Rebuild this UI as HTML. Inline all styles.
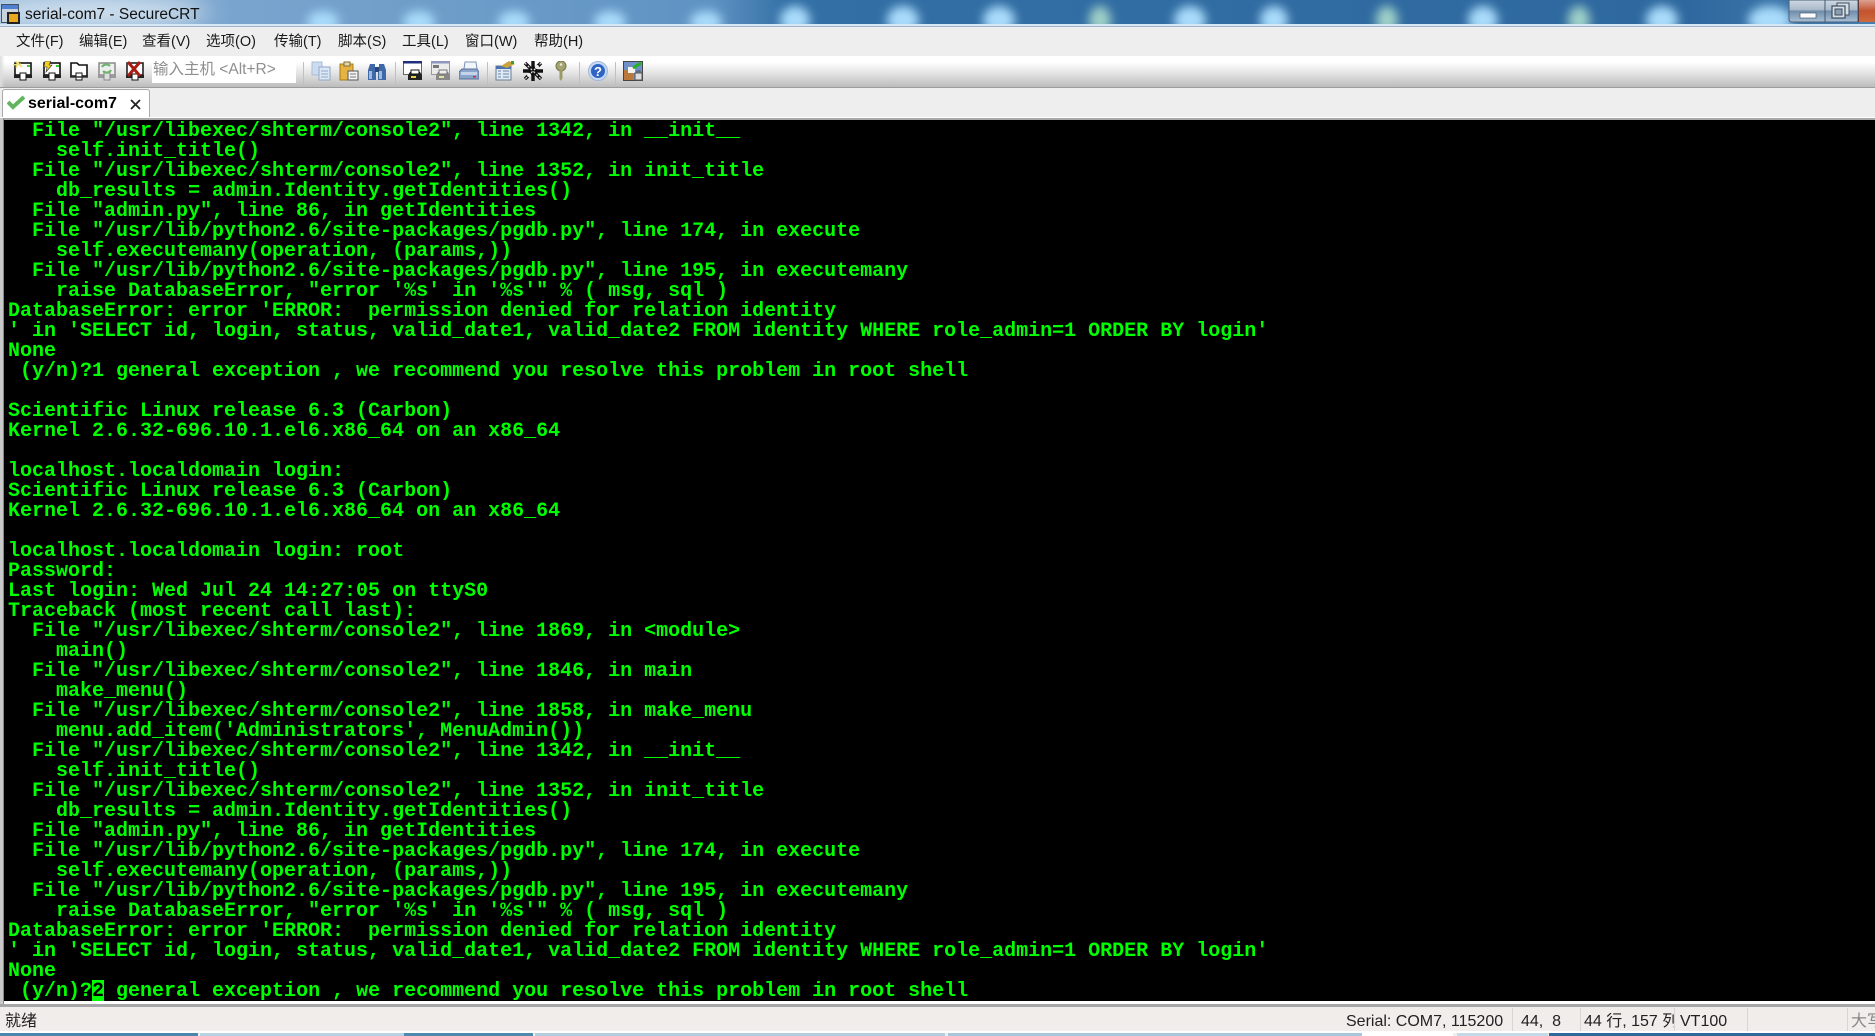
<!DOCTYPE html>
<html><head><meta charset="utf-8"><style>
html,body{margin:0;padding:0;background:#eee}
#w{position:relative;width:1875px;height:1036px;overflow:hidden;background:#eee;font-family:"Liberation Sans","Noto Sans CJK SC",sans-serif;color:#111}
#w>*{position:absolute}
.m{top:33px;font-size:14.5px;line-height:18px;white-space:nowrap;color:#1a1a1a}
.i{top:61px;width:20px;height:20px;filter:blur(.35px)}
.sep{top:62px;width:1px;height:22px;background:#c0c0c0}
pre{margin:0;left:8px;top:122px;font:bold 20px/20px "Liberation Mono",monospace;color:#0f0;white-space:pre}
.s{top:1013px;font-size:16px;line-height:18px;white-space:nowrap;color:#222}
.v{top:1008px;width:1px;height:23px;background:#d8d5d3}
.tb{top:1033px;height:3px}
</style></head><body><div id="w">
<svg style="left:0;top:0" width="1875" height="27" viewBox="0 0 1875 27">
<defs><filter id="b" x="-50%" y="-50%" width="200%" height="200%"><feGaussianBlur stdDeviation="5"/></filter>
<filter id="c"><feGaussianBlur stdDeviation="12"/></filter>
<linearGradient id="g" x1="0" x2="1" y1="0" y2="0"><stop offset="0" stop-color="#86add3"/><stop offset=".38" stop-color="#5f93c3"/><stop offset=".42" stop-color="#336fa5"/><stop offset=".9" stop-color="#2e689e"/><stop offset="1" stop-color="#457fb0"/></linearGradient></defs>
<rect width="1875" height="27" fill="url(#g)"/>
<ellipse cx="90" cy="12" rx="120" ry="16" fill="#d6e4f0" filter="url(#c)"/>
<g filter="url(#b)" fill="#a9dcfb">
<ellipse cx="323" cy="22" rx="16" ry="11"/><ellipse cx="419" cy="22" rx="16" ry="11"/><ellipse cx="514" cy="22" rx="16" ry="11"/><ellipse cx="610" cy="22" rx="16" ry="11"/><ellipse cx="706" cy="22" rx="16" ry="11"/>
<ellipse cx="795" cy="20" rx="15" ry="14"/><ellipse cx="903" cy="20" rx="16" ry="14"/><ellipse cx="999" cy="20" rx="16" ry="14"/><ellipse cx="1100" cy="20" rx="11" ry="14" fill="#9fd0c8"/><ellipse cx="1190" cy="20" rx="16" ry="14"/><ellipse cx="1274" cy="20" rx="14" ry="14"/><ellipse cx="1387" cy="20" rx="11" ry="14" fill="#9fd0c8"/><ellipse cx="1483" cy="20" rx="15" ry="14"/><ellipse cx="1579" cy="20" rx="11" ry="14" fill="#9fd0c8"/><ellipse cx="1662" cy="20" rx="16" ry="14"/><ellipse cx="1770" cy="20" rx="22" ry="14"/>
</g>
<rect y="24" width="1875" height="2" fill="#d6e8f6"/><rect y="26" width="1875" height="1" fill="#9fb4c6"/>
</svg>
<svg style="left:1788px;top:0" width="87" height="24" viewBox="0 0 87 24">
<defs><linearGradient id="bt" x1="0" x2="0" y1="0" y2="1"><stop offset="0" stop-color="#cfd9e2"/><stop offset=".45" stop-color="#a9b9c9"/><stop offset=".5" stop-color="#6f8cab"/><stop offset="1" stop-color="#a9c0d6"/></linearGradient>
<linearGradient id="rd" x1="0" x2="0" y1="0" y2="1"><stop offset="0" stop-color="#dca093"/><stop offset=".5" stop-color="#c2532f"/><stop offset="1" stop-color="#cf6a3a"/></linearGradient></defs>
<path d="M1 0V19Q1 22 4 22H70V0Z" fill="url(#bt)" stroke="#4d5f74"/>
<rect x="36.5" y="0" width="1" height="22" fill="#47596d"/>
<rect x="70" y="0" width="17" height="22" fill="url(#rd)"/>
<rect x="70" y="0" width="1" height="22" fill="#5a3a3a"/>
<rect x="12" y="13" width="16" height="5" fill="#fff" stroke="#4a5a6c" stroke-width=".7"/>
<rect x="49" y="3" width="12" height="12" fill="#d5dde5" stroke="#3f4d5e"/>
<rect x="44" y="6" width="13" height="12" fill="#d5dde5" stroke="#3f4d5e" stroke-width="1.2"/>
<rect x="47" y="9" width="7" height="6" fill="#8a9db1" stroke="#3f4d5e"/>
</svg>
<svg style="left:1px;top:3px" width="20" height="22" viewBox="0 0 20 22"><rect x=".5" y="1.5" width="17" height="18" fill="#c9d3de" stroke="#46525f"/><rect x="1" y="2" width="16" height="4" fill="#4f7fd0"/><rect x="6" y="9" width="13" height="12" fill="#222"/><rect x="8" y="11" width="9" height="8" fill="#e8a820"/></svg>
<div style="left:25px;top:5px;font-size:15.5px;line-height:19px;color:#111;white-space:nowrap">serial-com7 - SecureCRT</div>

<div class="m" style="left:16px">文件(F)</div><div class="m" style="left:79px">编辑(E)</div><div class="m" style="left:142px">查看(V)</div><div class="m" style="left:206px">选项(O)</div><div class="m" style="left:274px">传输(T)</div><div class="m" style="left:338px">脚本(S)</div><div class="m" style="left:402px">工具(L)</div><div class="m" style="left:465px">窗口(W)</div><div class="m" style="left:534px">帮助(H)</div>

<div style="left:0;top:56px;width:1875px;height:31px;background:linear-gradient(#fff 0,#fff 20%,#e4e4e4 55%,#bcbcbc 100%)"></div>
<div style="left:0;top:87px;width:1875px;height:1px;background:#9c9c9c"></div>
<div style="left:0;top:56px;width:5px;height:31px;background:linear-gradient(90deg,#ddd,transparent)"></div>

<svg class="i" style="left:13px" viewBox="0 0 20 20"><rect x="2" y="2" width="16" height="12" fill="#fff" stroke="#111" stroke-width="1.6"/><rect x="1" y="14" width="18" height="3" fill="#222"/><rect x="7" y="12" width="6" height="7" fill="#fff" stroke="#111"/><path d="M2 0L9 6M6 0L3 7M0 4L8 3" stroke="#e8e070" stroke-width="1.6"/><rect x="14" y="4" width="3" height="2" fill="#3c3"/></svg>
<svg class="i" style="left:42px" viewBox="0 0 20 20"><rect x="2" y="2" width="16" height="12" fill="#fff" stroke="#111" stroke-width="1.6"/><rect x="1" y="14" width="18" height="3" fill="#222"/><rect x="7" y="12" width="6" height="7" fill="#fff" stroke="#111"/><path d="M3 0H9L7 4H10L4 11L5 6H2Z" fill="#f2d21c" stroke="#333" stroke-width=".6"/><rect x="14" y="4" width="3" height="2" fill="#3c3"/></svg>
<svg class="i" style="left:69px" viewBox="0 0 20 20"><path d="M2 15V2H8L10 4H18V15Z" fill="#fff" stroke="#111" stroke-width="1.6"/><rect x="7" y="12" width="6" height="7" fill="#fff" stroke="#111"/><path d="M1 16H19" stroke="#333" stroke-width="1.4"/></svg>
<svg class="i" style="left:97px" viewBox="0 0 20 20"><rect x="2" y="2" width="16" height="12" fill="#eee" stroke="#8a8a8a" stroke-width="1.5"/><rect x="1" y="14" width="18" height="3" fill="#999"/><rect x="7" y="12" width="6" height="7" fill="#ddd" stroke="#888"/><path d="M5 6A5 5 0 0 1 13 5M14 9A5 5 0 0 1 6 10" fill="none" stroke="#6fb36f" stroke-width="2.2"/></svg>
<svg class="i" style="left:125px" viewBox="0 0 20 20"><rect x="2" y="2" width="16" height="12" fill="#fff" stroke="#222" stroke-width="1.6"/><rect x="1" y="14" width="18" height="3" fill="#222"/><rect x="7" y="13" width="6" height="6" fill="#fff" stroke="#111"/><path d="M3 1L15 15M15 1L3 15" stroke="#a81c12" stroke-width="3"/></svg>

<div style="left:152px;top:63px;width:144px;height:20px;background:#fff"></div>
<div style="left:153px;top:60px;font-size:15.5px;line-height:20px;color:#8f8f8f;white-space:nowrap">输入主机 &lt;Alt+R&gt;</div>
<div class="sep" style="left:303px"></div><div class="sep" style="left:395px"></div><div class="sep" style="left:487px"></div><div class="sep" style="left:579px"></div><div class="sep" style="left:615px"></div>

<svg class="i" style="left:311px" viewBox="0 0 20 20"><rect x="1" y="1" width="10" height="13" fill="#ccdcf0" stroke="#a9bdd8"/><rect x="8" y="6" width="11" height="13" fill="#dbe7f5" stroke="#8fa8c9"/><path d="M10 10H17M10 13H17M10 16H17" stroke="#8fa8c9"/></svg>
<svg class="i" style="left:339px" viewBox="0 0 20 20"><rect x="1" y="3" width="13" height="16" fill="#e5b341" stroke="#a87a18"/><rect x="5" y="1" width="6" height="4" fill="#d9d9b8" stroke="#8a6a20"/><rect x="9" y="10" width="10" height="9" fill="#f4f4f4" stroke="#555"/><path d="M11 13H17M11 16H17" stroke="#777"/></svg>
<svg class="i" style="left:367px" viewBox="0 0 20 20"><path d="M3 3H8V9H9V19H1V9Z" fill="#3f68a8"/><path d="M12 3H17L19 9V19H11V9H12Z" fill="#3f68a8"/><rect x="2" y="10" width="3" height="8" fill="#9db9e0"/><rect x="12" y="10" width="3" height="8" fill="#9db9e0"/><rect x="8" y="6" width="4" height="5" fill="#27467c"/></svg>
<svg class="i" style="left:403px" viewBox="0 0 20 20"><rect x=".5" y=".5" width="18" height="13" fill="#fff" stroke="#666"/><rect x="0" y="0" width="19" height="2.5" fill="#1f2f7c"/><path d="M7 11H17L19 14V19H5V14Z" fill="#222"/><rect x="8" y="9" width="8" height="4" fill="#fff" stroke="#111"/><rect x="8" y="15" width="5" height="2" fill="#e8d24a"/></svg>
<svg class="i" style="left:431px" viewBox="0 0 20 20"><rect x=".5" y=".5" width="18" height="13" fill="#ebebeb" stroke="#999"/><rect x="0" y="0" width="19" height="2.5" fill="#8f97bf"/><rect x="2" y="4" width="6" height="3" fill="#777"/><path d="M7 11H17L19 14V19H5V14Z" fill="#888"/><rect x="8" y="9" width="8" height="4" fill="#eee" stroke="#777"/><rect x="8" y="15" width="5" height="2" fill="#e8e0a0"/></svg>
<svg class="i" style="left:459px" viewBox="0 0 20 20"><path d="M6 1H17L18 8H5Z" fill="#f2f5fa" stroke="#7d93b4"/><path d="M3 8H18L20 11V18H0V11Z" fill="#8aa4cb" stroke="#59719a"/><rect x="2" y="11" width="16" height="3" fill="#c4d3e8"/><rect x="14" y="15" width="3" height="1.5" fill="#c33"/></svg>
<svg class="i" style="left:495px" viewBox="0 0 20 20"><rect x="1" y="5" width="15" height="14" fill="#dfe8f3" stroke="#6b7c90"/><rect x="1" y="5" width="15" height="3" fill="#4d73ad"/><path d="M3 10H6M8 10H14M3 13H6M8 13H14M3 16H6M8 16H14" stroke="#6a87ad"/><path d="M6 5L14 0L20 3L12 7Z" fill="#c9a33f"/><rect x="16" y="0" width="3" height="3" fill="#3ba03b"/></svg>
<svg class="i" style="left:523px" viewBox="0 0 20 20"><path d="M2 2L18 18M18 2L2 18M10 0V20M0 10H20" stroke="#111" stroke-width="3.4"/><path d="M2 2L18 18M18 2L2 18" stroke="#ddd" stroke-width="1.2" stroke-dasharray="2 2"/><circle cx="6" cy="14" r="2" fill="#eee"/><circle cx="14" cy="6" r="2" fill="#eee"/></svg>
<svg class="i" style="left:551px" viewBox="0 0 20 20"><circle cx="10" cy="5" r="5" fill="#a5a36c" stroke="#77754a"/><circle cx="10" cy="3.5" r="1.3" fill="#e8e8d8"/><path d="M8.5 9H11.5V17L10 20L8.5 18V15Z" fill="#9c9a66"/></svg>
<svg class="i" style="left:588px" viewBox="0 0 20 20"><circle cx="10" cy="10" r="9.5" fill="#c6d9f2" stroke="#9db7dc"/><circle cx="10" cy="10" r="7" fill="#2f63c4"/><text x="10" y="15" font-family="Liberation Sans" font-weight="bold" font-size="13" text-anchor="middle" fill="#fff">?</text></svg>
<svg class="i" style="left:623px" viewBox="0 0 20 20"><rect x=".5" y=".5" width="19" height="19" fill="#6f90c8" stroke="#444"/><rect x="1" y="9" width="9" height="10" fill="#b9793c"/><rect x="5" y="6" width="7" height="6" fill="#f2f2f2"/><path d="M10 7L18 2" stroke="#24b024" stroke-width="3"/><rect x="12" y="12" width="7" height="7" fill="#ddd" stroke="#555"/><path d="M14 12V10H17V12" fill="none" stroke="#555"/></svg>

<div style="left:0;top:88px;width:1875px;height:30px;background:#eeeeee"></div>
<div style="left:2px;top:89px;width:148px;height:30px;background:#fff;border:1px solid #aaa;border-bottom:0;border-radius:3px 3px 0 0;box-sizing:border-box"></div>
<svg style="left:7px;top:95px" width="18" height="15" viewBox="0 0 18 15"><path d="M1 7L6 12L17 2" fill="none" stroke="#62b55e" stroke-width="4"/></svg>
<div style="left:28px;top:94px;font-size:16px;line-height:19px;font-weight:bold;color:#000;white-space:nowrap">serial-com7</div>
<svg style="left:130px;top:99px" width="11" height="11" viewBox="0 0 11 11"><path d="M1 1L10 10M10 1L1 10" stroke="#222" stroke-width="1.8"/></svg>

<div style="left:0;top:117px;width:1875px;height:1px;background:#fff"></div>
<div style="left:0;top:118px;width:1875px;height:2px;background:#a8a8a8"></div>
<div style="left:0;top:118px;width:4px;height:889px;background:#c9c9c9;border-right:1px solid #8a8a8a;box-sizing:border-box"></div>
<div style="left:4px;top:120px;width:1871px;height:881px;background:#000"></div>
<pre>  File "/usr/libexec/shterm/console2", line 1342, in __init__
    self.init_title()
  File "/usr/libexec/shterm/console2", line 1352, in init_title
    db_results = admin.Identity.getIdentities()
  File "admin.py", line 86, in getIdentities
  File "/usr/lib/python2.6/site-packages/pgdb.py", line 174, in execute
    self.executemany(operation, (params,))
  File "/usr/lib/python2.6/site-packages/pgdb.py", line 195, in executemany
    raise DatabaseError, "error '%s' in '%s'" % ( msg, sql )
DatabaseError: error 'ERROR:  permission denied for relation identity
' in 'SELECT id, login, status, valid_date1, valid_date2 FROM identity WHERE role_admin=1 ORDER BY login'
None
 (y/n)?1 general exception , we recommend you resolve this problem in root shell

Scientific Linux release 6.3 (Carbon)
Kernel 2.6.32-696.10.1.el6.x86_64 on an x86_64

localhost.localdomain login: 
Scientific Linux release 6.3 (Carbon)
Kernel 2.6.32-696.10.1.el6.x86_64 on an x86_64

localhost.localdomain login: root
Password: 
Last login: Wed Jul 24 14:27:05 on ttyS0
Traceback (most recent call last):
  File "/usr/libexec/shterm/console2", line 1869, in &lt;module&gt;
    main()
  File "/usr/libexec/shterm/console2", line 1846, in main
    make_menu()
  File "/usr/libexec/shterm/console2", line 1858, in make_menu
    menu.add_item('Administrators', MenuAdmin())
  File "/usr/libexec/shterm/console2", line 1342, in __init__
    self.init_title()
  File "/usr/libexec/shterm/console2", line 1352, in init_title
    db_results = admin.Identity.getIdentities()
  File "admin.py", line 86, in getIdentities
  File "/usr/lib/python2.6/site-packages/pgdb.py", line 174, in execute
    self.executemany(operation, (params,))
  File "/usr/lib/python2.6/site-packages/pgdb.py", line 195, in executemany
    raise DatabaseError, "error '%s' in '%s'" % ( msg, sql )
DatabaseError: error 'ERROR:  permission denied for relation identity
' in 'SELECT id, login, status, valid_date1, valid_date2 FROM identity WHERE role_admin=1 ORDER BY login'
None
 (y/n)?<span style="background:#0f0;color:#000">2</span> general exception , we recommend you resolve this problem in root shell</pre>

<div style="left:4px;top:1001px;width:1871px;height:3px;background:#fff"></div>
<div style="left:0;top:1004px;width:1875px;height:3px;background:#a6a6a6"></div>
<div style="left:0;top:1007px;width:1875px;height:24px;background:#f0edeb"></div>
<div style="left:0;top:1031px;width:1875px;height:2px;background:#fff"></div>
<div class="s" style="left:5px">就绪</div>
<div class="s" style="left:1346px">Serial: COM7, 115200</div>
<div class="v" style="left:1512px"></div>
<div class="s" style="left:1521px;white-space:pre">44,  8</div>
<div class="v" style="left:1580px"></div>
<div class="s" style="left:1584px;width:90px;overflow:hidden">44 行, 157 列</div>
<div class="v" style="left:1674px"></div>
<div class="s" style="left:1680px">VT100</div>
<div class="v" style="left:1747px"></div>
<div class="v" style="left:1847px"></div>
<div class="s" style="left:1851px;color:#888">大写</div>

<div class="tb" style="left:0;width:198px;background:#4a86ad"></div>
<div class="tb" style="left:200px;width:204px;background:#b9d2e2"></div>
<div class="tb" style="left:404px;width:129px;background:#4f89ad"></div>
<div class="tb" style="left:535px;width:410px;background:#b3cddd"></div>
<div class="tb" style="left:948px;width:414px;background:#a9c7da"></div>
<div class="tb" style="left:1362px;width:91px;background:#fff"></div>
<div class="tb" style="left:1457px;width:91px;background:#c5d9e6"></div>
<div class="tb" style="left:1549px;width:326px;background:#2f6a9c"></div>
</div></body></html>
